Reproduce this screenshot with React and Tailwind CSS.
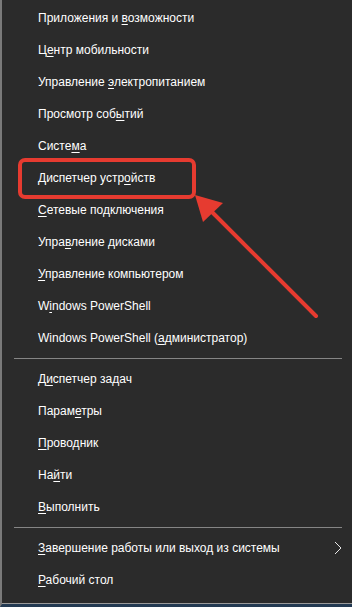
import React from "react";

const top = [
  ["Приложения и ", "в", "озможности"],
  ["Ц", "е", "нтр мобильности"],
  ["Управление ", "э", "лектропитанием"],
  ["Просмотр соб", "ы", "тий"],
  ["Систе", "м", "а"],
  ["Диспетчер устр", "о", "йств"],
  ["", "С", "етевые подключения"],
  ["Упра", "в", "ление дисками"],
  ["", "У", "правление компьютером"],
  ["W", "i", "ndows PowerShell"],
  ["Windows PowerShell (", "а", "дминистратор)"],
];

const middle = [
  ["Д", "и", "спетчер задач"],
  ["Парам", "е", "тры"],
  ["", "П", "роводник"],
  ["На", "й", "ти"],
  ["", "В", "ыполнить"],
];

const Item = ({ parts, arrow }) => (
  <div className="h-8 flex items-center pl-9 pr-[10px] justify-between">
    <span className="whitespace-nowrap">
      {parts[0]}
      <span className="underline underline-offset-2">{parts[1]}</span>
      {parts[2]}
    </span>
    {arrow && (
      <svg width="8" height="14" viewBox="0 0 8 14">
        <path d="M1 1 L7 7 L1 13" fill="none" stroke="#e8e8e8" strokeWidth="1" />
      </svg>
    )}
  </div>
);

const Separator = () => <div className="h-px bg-[#858585] ml-3 mr-[10px] mt-1 mb-[4px]" />;

export default function App() {
  return (
    <div
      className="relative w-[352px] h-[607px] overflow-hidden bg-[#2b2b2b] text-white text-[12px] leading-none"
      style={{ fontFamily: '"Liberation Sans", Arial, sans-serif' }}
    >
      <div className="flex flex-col h-full border-l-2 border-[#7a7a7a] border-b-[3px] border-b-[#233a52]">
        <div className="flex flex-col pt-[2px] flex-1 border-b border-[#9a9a9a]">
          {top.map((p, i) => (
            <Item parts={p} key={i} />
          ))}
          <Separator />
          {middle.map((p, i) => (
            <Item parts={p} key={i} />
          ))}
          <Separator />
          <Item parts={["", "З", "авершение работы или выход из системы"]} arrow />
          <Item parts={["", "Р", "абочий стол"]} />
        </div>
      </div>

      {/* highlight box */}
      <div className="absolute left-[18px] top-[158px] w-[178px] h-[41px] border-[4px] border-[#e63b30] rounded-[7px]" />

      {/* arrow */}
      <svg className="absolute left-0 top-0" width="352" height="607">
        <line x1="316" y1="316" x2="208" y2="208" stroke="#e63b30" strokeWidth="4" strokeLinecap="round" />
        <polygon points="195,195 223,203 203,222" fill="#e63b30" />
      </svg>
    </div>
  );
}
